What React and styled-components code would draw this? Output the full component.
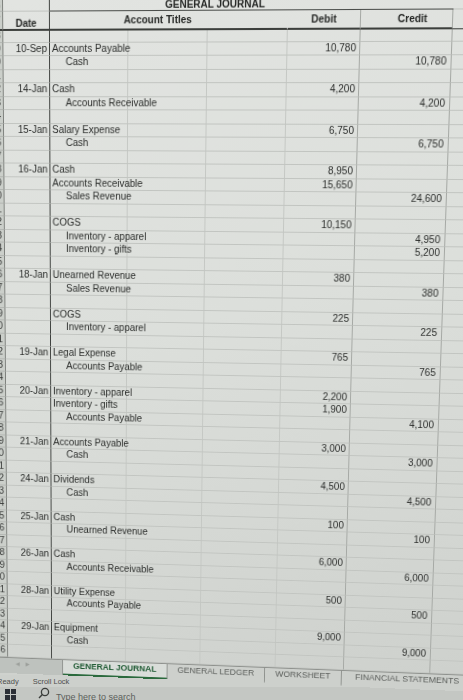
import React from "react";
import styled, { createGlobalStyle } from "styled-components";

// photo of a monitor: the sheet is drawn flat, then projected so the
// lower right side falls away like in the reference shot
const SHEET_PROJECTION =
  "matrix3d(0.973864, -0.002447, 0, -0.00006567, 0.003413, 1.008668, 0, 0.00009641, 0, 0, 1, 0, 0, 0, 0, 1)";

const ROW_H = 13.5;

// [date, account title, indent, debit, credit] ; null = empty row
const lines = [
  ["10-Sep", "Accounts Payable", 0, "10,780", ""],
  ["", "Cash", 1, "", "10,780"],
  null,
  ["14-Jan", "Cash", 0, "4,200", ""],
  ["", "Accounts Receivable", 1, "", "4,200"],
  null,
  ["15-Jan", "Salary Expense", 0, "6,750", ""],
  ["", "Cash", 1, "", "6,750"],
  null,
  ["16-Jan", "Cash", 0, "8,950", ""],
  ["", "Accounts Receivable", 0, "15,650", ""],
  ["", "Sales Revenue", 1, "", "24,600"],
  null,
  ["", "COGS", 0, "10,150", ""],
  ["", "Inventory - apparel", 1, "", "4,950"],
  ["", "Inventory - gifts", 1, "", "5,200"],
  null,
  ["18-Jan", "Unearned Revenue", 0, "380", ""],
  ["", "Sales Revenue", 1, "", "380"],
  null,
  ["", "COGS", 0, "225", ""],
  ["", "Inventory - apparel", 1, "", "225"],
  null,
  ["19-Jan", "Legal Expense", 0, "765", ""],
  ["", "Accounts Payable", 1, "", "765"],
  null,
  ["20-Jan", "Inventory - apparel", 0, "2,200", ""],
  ["", "Inventory - gifts", 0, "1,900", ""],
  ["", "Accounts Payable", 1, "", "4,100"],
  null,
  ["21-Jan", "Accounts Payable", 0, "3,000", ""],
  ["", "Cash", 1, "", "3,000"],
  null,
  ["24-Jan", "Dividends", 0, "4,500", ""],
  ["", "Cash", 1, "", "4,500"],
  null,
  ["25-Jan", "Cash", 0, "100", ""],
  ["", "Unearned Revenue", 1, "", "100"],
  null,
  ["26-Jan", "Cash", 0, "6,000", ""],
  ["", "Accounts Receivable", 1, "", "6,000"],
  null,
  ["28-Jan", "Utility Expense", 0, "500", ""],
  ["", "Accounts Payable", 1, "", "500"],
  null,
  ["29-Jan", "Equipment", 0, "9,000", ""],
  ["", "Cash", 1, "", "9,000"],
  null,
];

const tabs = [
  { label: "GENERAL JOURNAL", w: 113, active: true },
  { label: "GENERAL LEDGER", w: 104 },
  { label: "WORKSHEET", w: 81 },
  { label: "FINANCIAL STATEMENTS" },
];

const GlobalStyle = createGlobalStyle`
  html, body {
    margin: 0;
    height: 700px;
    overflow: hidden;
    background: #cfd2ce;
    font-family: "Liberation Sans", Arial, sans-serif;
  }
`;

const Page = styled.div`
  display: flex;
  flex-direction: column;
  height: 700px;
`;

const SheetArea = styled.div`
  height: 675px;
`;

const Sheet = styled.div`
  width: 560px;
  margin-left: -30px;
  transform-origin: 80px 49px;
  transform: ${SHEET_PROJECTION};
  background: linear-gradient(165deg, #e2e4e1 0%, #dcdfdb 45%, #cdd0cc 100%);
  color: #2b2d2b;
  font-size: 10px;
`;

const Row = styled.div`
  display: grid;
  grid-template-columns: 32px 48px 240px 72px 90px 1fr;
  height: ${(p) => p.$h}px;
  line-height: ${(p) => p.$h - 1}px;
  white-space: nowrap;
`;

const RowNum = styled.div`
  background: #cbcfca;
  border-right: 1px solid #7d807c;
  border-bottom: 1px solid ${(p) => p.$rule || "#b3b6b2"};
  border-bottom-width: ${(p) => (p.$rule ? 2 : 1)}px;
  text-align: right;
  padding-right: 2px;
  overflow: hidden;
  color: #3a3c3a;
`;

const DateCell = styled.div`
  border-right: 1px solid #3d403d;
  border-bottom: 1px solid ${(p) => p.$rule || "#c2c5c1"};
  text-align: right;
  padding-right: 2px;
`;

const TitleCell = styled.div`
  padding-left: ${(p) => (p.$indent ? 16 : 2)}px;
  border-bottom: 1px solid ${(p) => p.$rule || "#c2c5c1"};
  background-image: repeating-linear-gradient(
    to right,
    transparent 0 79px,
    #c5c8c4 79px 80px
  );
`;

const AmountCell = styled.div`
  text-align: right;
  padding-right: ${(p) => p.$pad}px;
  border-right: 1px solid #a6a9a5;
  border-bottom: 1px solid ${(p) => p.$rule || "#c2c5c1"};
`;

const Spare = styled.div`
  border-bottom: 1px solid ${(p) => p.$rule || "#c2c5c1"};
  background-image: repeating-linear-gradient(
    to right,
    transparent 0 45px,
    #c5c8c4 45px 46px
  );
`;

const Banner = styled.div`
  grid-column: span 3;
  padding-left: 117px;
  font-weight: 700;
  color: #262826;
  border-bottom: 1px solid #4a4d4a;
`;

const HeadCell = styled.div`
  display: flex;
  justify-content: center;
  align-items: ${(p) => (p.$bottom ? "flex-end" : "center")};
  padding: ${(p) => p.$pad || "0"};
  line-height: ${(p) => (p.$bottom ? 10 : 11)}px;
  font-weight: 700;
  color: #262826;
  border-right: 1px solid ${(p) => p.$edge || "#a6a9a5"};
  border-bottom: 2px solid #3c3f3c;
`;

const TabBar = styled.div`
  display: flex;
  height: 17.5px;
  border-top: 1px solid #8f928e;
  background: #cdd0cc;
  font-size: 9px;
  line-height: 13px;
`;

const ScrollArrows = styled.div`
  width: 92px;
  padding-left: 40px;
  box-sizing: border-box;
  background: #bec2be;
  color: #9c9f9b;
  font-size: 6px;
  letter-spacing: 6px;
  border-right: 1px solid #8f928e;
`;

const Tab = styled.div`
  flex: ${(p) => (p.$w ? `0 0 ${p.$w}px` : "1")};
  text-align: ${(p) => (p.$w ? "center" : "left")};
  padding-left: ${(p) => (p.$w ? 0 : 14)}px;
  box-sizing: border-box;
  border-right: 1px solid #8f928e;
  color: ${(p) => (p.$active ? "#1f5a33" : "#5a5d5a")};
  font-weight: ${(p) => (p.$active ? 700 : 400)};
  background: ${(p) => (p.$active ? "#d9ddd9" : "transparent")};
  border-bottom: 2px solid ${(p) => (p.$active ? "#2b6a3d" : "transparent")};
`;

const StatusBar = styled.div`
  display: flex;
  align-items: center;
  gap: 14px;
  height: 12px;
  font-size: 7.5px;
  color: #4d4f4d;
  background: #cdd0cc;

  span:first-child {
    margin-left: -3px;
  }
`;

const Taskbar = styled.div`
  display: flex;
  align-items: flex-start;
  height: 13px;
  overflow: hidden;
  background: #c4c7c3;
`;

const StartLogo = styled.svg`
  margin: 2px 0 0 5px;
  flex: none;
`;

const SearchGlyph = styled.svg`
  margin: 0 0 0 22px;
  flex: none;
`;

const SearchHint = styled.span`
  margin-left: 6px;
  padding-top: 5px;
  font-size: 9px;
  color: #5c5f5c;
`;

function JournalRow({ line, num }) {
  const [date, title, indent, debit, credit] = line || ["", "", 0, "", ""];
  return (
    <Row $h={ROW_H}>
      <RowNum>{num}</RowNum>
      <DateCell>{date}</DateCell>
      <TitleCell $indent={indent}>{title}</TitleCell>
      <AmountCell $pad={3}>{debit}</AmountCell>
      <AmountCell $pad={4}>{credit}</AmountCell>
      <Spare />
    </Row>
  );
}

export default function App() {
  return (
    <Page>
      <GlobalStyle />
      <SheetArea>
        <Sheet>
          <Row $h={12}>
            <RowNum>6</RowNum>
            <DateCell />
            <Banner>GENERAL JOURNAL</Banner>
            <Spare />
          </Row>
          <Row $h={19}>
            <RowNum $rule="#3c3f3c">7</RowNum>
            <HeadCell $bottom $edge="#3d403d">
              Date
            </HeadCell>
            <HeadCell $pad="0 20px 0 0" $edge="transparent">
              Account Titles
            </HeadCell>
            <HeadCell>Debit</HeadCell>
            <HeadCell $pad="0 0 0 12px">Credit</HeadCell>
            <Spare $rule="#3c3f3c" />
          </Row>
          <Row $h={11.5}>
            <RowNum>8</RowNum>
            <DateCell />
            <TitleCell />
            <AmountCell $pad={3} />
            <AmountCell $pad={4} />
            <Spare />
          </Row>
          {lines.map((line, i) => (
            <JournalRow key={i} line={line} num={i + 9} />
          ))}
          <TabBar>
            <ScrollArrows>◀▶</ScrollArrows>
            {tabs.map((t) => (
              <Tab key={t.label} $w={t.w} $active={t.active}>
                {t.label}
              </Tab>
            ))}
          </TabBar>
        </Sheet>
      </SheetArea>
      <StatusBar>
        <span>Ready</span>
        <span>Scroll Lock</span>
      </StatusBar>
      <Taskbar>
        <StartLogo width="11" height="11" viewBox="0 0 11 11">
          <rect x="0" y="0" width="5" height="5" fill="#2b2f36" />
          <rect x="6" y="0" width="5" height="5" fill="#2b2f36" />
          <rect x="0" y="6" width="5" height="5" fill="#2b2f36" />
          <rect x="6" y="6" width="5" height="5" fill="#2b2f36" />
        </StartLogo>
        <SearchGlyph width="12" height="12" viewBox="0 0 12 12">
          <circle cx="7" cy="5" r="3.6" fill="none" stroke="#3a3d3a" strokeWidth="1.3" />
          <line x1="4.4" y1="7.6" x2="1" y2="11" stroke="#3a3d3a" strokeWidth="1.4" />
        </SearchGlyph>
        <SearchHint>Type here to search</SearchHint>
      </Taskbar>
    </Page>
  );
}
